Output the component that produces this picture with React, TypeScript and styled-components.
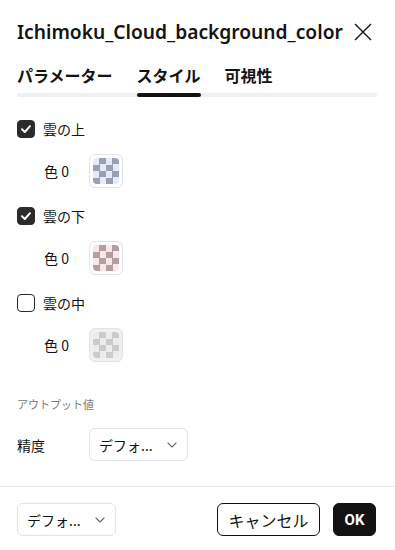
import React, { useState } from "react";
import styled, { createGlobalStyle } from "styled-components";

const Global = createGlobalStyle`
  html, body { margin: 0; padding: 0; background: #ffffff; }
  body {
    font-family: "Noto Sans", "Noto Sans CJK JP", sans-serif;
    color: #131313;
    -webkit-font-smoothing: antialiased;
  }
  * { box-sizing: border-box; }
`;

const Dialog = styled.div`
  width: 395px;
  height: 550px;
  display: flex;
  flex-direction: column;
  background: #fff;
`;

const Header = styled.div`
  height: 64px;
  padding: 0 23px 0 17px;
  display: flex;
  align-items: center;
  justify-content: space-between;
`;

const Title = styled.h2`
  margin: 0;
  font-size: 19.2px;
  font-weight: 600;
  line-height: 28px;
  color: #131313;
  white-space: nowrap;
`;

const CloseButton = styled.button`
  width: 18px;
  height: 18px;
  padding: 0;
  border: 0;
  background: none;
  display: flex;
  align-items: center;
  justify-content: center;
  cursor: pointer;
`;

const TabList = styled.div`
  position: relative;
  margin: 0 18px 0 17px;
  height: 33px;
  display: flex;
  gap: 24px;
  &::after {
    content: "";
    position: absolute;
    left: 0;
    right: 0;
    bottom: 0;
    height: 4px;
    border-radius: 2px;
    background: #f0f0f0;
  }
`;

const Tab = styled.div<{ $active?: boolean }>`
  position: relative;
  font-family: "Noto Sans CJK JP", sans-serif;
  font-size: 16px;
  font-weight: 700;
  line-height: 22px;
  color: #131313;
  z-index: 1;
  &::after {
    content: "";
    display: ${(p) => (p.$active ? "block" : "none")};
    position: absolute;
    left: 0;
    right: 0;
    top: 29px;
    height: 4px;
    border-radius: 2px;
    background: #131313;
  }
`;

const Content = styled.div`
  padding: 23px 17px 0;
  display: flex;
  flex-direction: column;
`;

const Group = styled.div`
  display: flex;
  flex-direction: column;
  gap: 16px;
  & + & { margin-top: 19px; }
`;

const CheckRow = styled.label`
  display: flex;
  align-items: center;
  gap: 8px;
  height: 18px;
  font-family: "Noto Sans CJK JP", sans-serif;
  font-size: 14px;
  color: #131313;
  cursor: pointer;
`;

const Box = styled.span<{ $checked: boolean }>`
  width: 18px;
  height: 18px;
  border-radius: 4px;
  display: flex;
  align-items: center;
  justify-content: center;
  background: ${(p) => (p.$checked ? "#2b2b2b" : "#fff")};
  border: 1px solid #2b2b2b;
`;

const ColorRow = styled.div`
  display: flex;
  align-items: center;
  padding-left: 27px;
  height: 34px;
`;

const ColorLabel = styled.span`
  width: 45px;
  font-family: "Noto Sans CJK JP", sans-serif;
  font-size: 14px;
  color: #131313;
`;

const Swatch = styled.button<{ $disabled?: boolean }>`
  width: 34px;
  height: 34px;
  padding: 3px;
  border: 1px solid #e0e3eb;
  border-radius: 6px;
  background: ${(p) => (p.$disabled ? "#f0f0f0" : "#fff")};
  display: flex;
  align-items: center;
  justify-content: center;
  cursor: pointer;
`;

const Checker = styled.span<{ $light: string; $dark: string }>`
  width: 26px;
  height: 26px;
  border-radius: 4px;
  background: repeating-conic-gradient(
      ${(p) => p.$dark} 0 25%,
      ${(p) => p.$light} 0 50%
    )
    0 0 / 13px 13px;
`;

const SectionTitle = styled.div`
  margin-top: 34px;
  font-family: "Noto Sans CJK JP", sans-serif;
  font-size: 11px;
  line-height: 16px;
  color: #787b86;
`;

const FieldRow = styled.div`
  margin-top: 16px;
  display: flex;
  align-items: center;
`;

const FieldLabel = styled.span`
  width: 72px;
  font-family: "Noto Sans CJK JP", sans-serif;
  font-size: 14px;
  color: #131313;
`;

const Select = styled.button`
  width: 99px;
  height: 33px;
  padding: 0 10px 0 9px;
  border: 1px solid #e0e3eb;
  border-radius: 6px;
  background: #fff;
  display: flex;
  align-items: center;
  justify-content: space-between;
  font-family: "Noto Sans CJK JP", sans-serif;
  font-size: 14px;
  color: #131313;
  cursor: pointer;
`;

const Divider = styled.div`
  margin-top: 25px;
  height: 1px;
  background: #e6e6e6;
`;

const Footer = styled.div`
  padding: 16px 19px 0 17px;
  display: flex;
  align-items: center;
`;

const Spacer = styled.div`
  flex: 1;
`;

const Button = styled.button<{ $primary?: boolean; $w: number }>`
  width: ${(p) => p.$w}px;
  height: 33px;
  padding: 0;
  border-radius: 6px;
  border: 1px solid #131313;
  background: ${(p) => (p.$primary ? "#131313" : "#fff")};
  color: ${(p) => (p.$primary ? "#fff" : "#131313")};
  font-family: ${(p) => (p.$primary ? '"Roboto", sans-serif' : '"Noto Sans CJK JP", sans-serif')};
  font-size: ${(p) => (p.$primary ? "15px" : "16px")};
  font-weight: ${(p) => (p.$primary ? 700 : 400)};
  cursor: pointer;
  & + & { margin-left: 13px; }
`;

const CheckIcon = () => (
  <svg width="12" height="12" viewBox="0 0 12 12" fill="none">
    <path d="M2 6.2 L4.8 9 L10 3.2" stroke="#fff" strokeWidth="2" strokeLinecap="round" strokeLinejoin="round" />
  </svg>
);

const Chevron = () => (
  <svg width="10" height="6" viewBox="0 0 10 6" fill="none">
    <path d="M1 1 L5 5 L9 1" stroke="#6a6d78" strokeWidth="1.1" strokeLinecap="round" strokeLinejoin="round" />
  </svg>
);

const XIcon = () => (
  <svg width="18" height="18" viewBox="0 0 18 18" fill="none">
    <path d="M1 1 L17 17 M17 1 L1 17" stroke="#131313" strokeWidth="1.4" />
  </svg>
);

type Item = { label: string; light: string; dark: string; checked: boolean };

const items: Item[] = [
  { label: "雲の上", light: "#e6e9f6", dark: "#9aa0b3", checked: true },
  { label: "雲の下", light: "#fbe6e7", dark: "#b29fa2", checked: true },
  { label: "雲の中", light: "#ececec", dark: "#cbcbcb", checked: false },
];

export default function App() {
  const [state, setState] = useState(items.map((i) => i.checked));
  return (
    <>
      <Global />
      <Dialog>
        <Header>
          <Title>Ichimoku_Cloud_background_color</Title>
          <CloseButton aria-label="close">
            <XIcon />
          </CloseButton>
        </Header>
        <TabList>
          <Tab>パラメーター</Tab>
          <Tab $active>スタイル</Tab>
          <Tab>可視性</Tab>
        </TabList>
        <Content>
          {items.map((it, i) => (
            <Group key={it.label}>
              <CheckRow onClick={() => setState((s) => s.map((v, j) => (j === i ? !v : v)))}>
                <Box $checked={state[i]}>{state[i] && <CheckIcon />}</Box>
                {it.label}
              </CheckRow>
              <ColorRow>
                <ColorLabel>色 0</ColorLabel>
                <Swatch $disabled={!state[i]}>
                  <Checker $light={it.light} $dark={it.dark} />
                </Swatch>
              </ColorRow>
            </Group>
          ))}
          <SectionTitle>アウトプット値</SectionTitle>
          <FieldRow>
            <FieldLabel>精度</FieldLabel>
            <Select>
              <span>デフォ...</span>
              <Chevron />
            </Select>
          </FieldRow>
        </Content>
        <Divider />
        <Footer>
          <Select>
            <span>デフォ...</span>
            <Chevron />
          </Select>
          <Spacer />
          <Button $w={103}>キャンセル</Button>
          <Button $primary $w={43}>OK</Button>
        </Footer>
      </Dialog>
    </>
  );
}
